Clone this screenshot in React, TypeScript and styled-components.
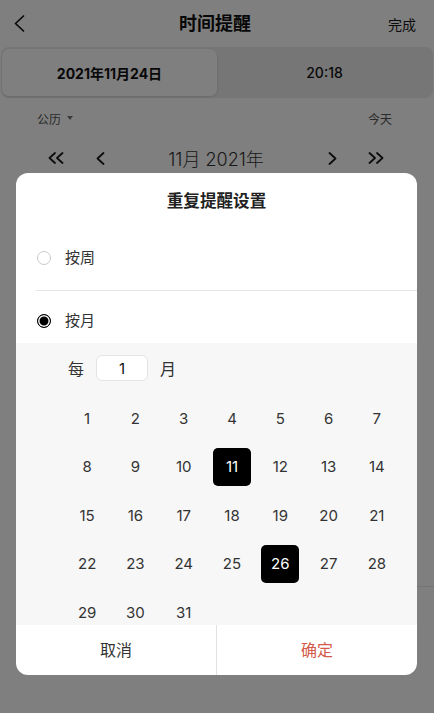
import React from "react";
import styled, { createGlobalStyle } from "styled-components";

const GlobalStyle = createGlobalStyle`
  html, body { margin: 0; padding: 0; background: #fff; }
  body { font-family: "Inter", "Noto Sans CJK SC", sans-serif; -webkit-font-smoothing: antialiased; }
  * { box-sizing: border-box; }
`;

const Screen = styled.div`
  position: relative;
  width: 434px;
  height: 713px;
  overflow: hidden;
  background: #ffffff;
`;

const Page = styled.div`
  display: flex;
  flex-direction: column;
  height: 100%;
`;

const NavBar = styled.div`
  height: 47px;
  display: grid;
  grid-template-columns: 1fr auto 1fr;
  align-items: center;
  padding: 0 18px 0 14px;
`;

const BackBtn = styled.div`
  display: flex;
  align-items: center;
  color: #111;
`;

const NavTitle = styled.div`
  font-size: 18px;
  font-weight: 700;
  color: #111;
  line-height: 1;
`;

const NavAction = styled.div`
  justify-self: end;
  font-size: 14px;
  color: #1a1a1a;
`;

const Segmented = styled.div`
  margin: 0 1px;
  height: 51px;
  padding: 2px 1px;
  display: flex;
  background: #ececec;
  border-radius: 8px;
`;

const SegTab = styled.div<{ $active?: boolean }>`
  flex: 1;
  display: flex;
  align-items: center;
  justify-content: center;
  font-size: ${(p) => (p.$active ? 14 : 14)}px;
  font-weight: ${(p) => (p.$active ? 700 : 500)};
  color: #111;
  border-radius: 7px;
  background: ${(p) => (p.$active ? "#ffffff" : "transparent")};
  box-shadow: ${(p) => (p.$active ? "0 1px 3px rgba(0,0,0,0.12)" : "none")};
`;

const SubBar = styled.div`
  height: 40px;
  display: flex;
  align-items: center;
  justify-content: space-between;
  padding: 0 42px 0 37px;
  font-size: 12px;
  color: #555;
`;

const CalType = styled.div`
  display: flex;
  align-items: center;
  gap: 6px;
`;

const Caret = styled.span`
  width: 0;
  height: 0;
  border-left: 3.5px solid transparent;
  border-right: 3.5px solid transparent;
  border-top: 4px solid #777;
`;

const MonthNav = styled.div`
  height: 40px;
  display: flex;
  align-items: center;
  padding: 0 42px 0 40px;
`;

const NavGroup = styled.div`
  display: flex;
  align-items: center;
  gap: 12px;
`;

const IconBtn = styled.div`
  width: 32px;
  display: flex;
  justify-content: center;
  color: #1a1a1a;
`;

const MonthTitle = styled.div`
  flex: 1;
  text-align: center;
  font-size: 18px;
  font-weight: 300;
  color: #333;
`;

const CalendarBody = styled.div`
  height: 408px;
`;

const PageDivider = styled.div`
  height: 1px;
  margin-left: 20px;
  background: #e8e8e8;
`;

const Overlay = styled.div`
  position: absolute;
  inset: 0;
  background: rgba(0, 0, 0, 0.5);
  padding: 173px 17px 0 16px;
`;

const Modal = styled.div`
  width: 401px;
  height: 502px;
  background: #fff;
  border-radius: 12px;
  overflow: hidden;
  display: flex;
  flex-direction: column;
`;

const ModalTitle = styled.div`
  padding: 17px 0 17px;
  line-height: 22px;
  text-align: center;
  font-size: 16.6px;
  font-weight: 700;
  color: #222;
`;

const OptionRow = styled.div<{ $bottom: number }>`
  display: flex;
  align-items: center;
  gap: 14px;
  padding: ${(p) => (p.$bottom === 20 ? 18 : 19)}px 0 ${(p) => p.$bottom + 1}px 21px;
  line-height: 22px;
  font-size: 15px;
  color: #333;
`;

const Radio = styled.span<{ $checked?: boolean }>`
  width: 14px;
  height: 14px;
  border-radius: 50%;
  border: ${(p) => (p.$checked ? "1.5px solid #000" : "1px solid #c9c9c9")};
  background: ${(p) => (p.$checked ? "#000" : "#fff")};
  box-shadow: ${(p) => (p.$checked ? "inset 0 0 0 1.5px #fff" : "none")};
`;

const RowDivider = styled.div`
  height: 1px;
  margin-left: 20px;
  background: #e6e6e6;
`;

const MonthPanel = styled.div`
  height: 282px;
  overflow: hidden;
  background: #f7f7f7;
`;

const EveryRow = styled.div`
  display: flex;
  align-items: center;
  gap: 12px;
  padding: 12px 0 0 52px;
  margin-bottom: 13px;
  font-size: 16px;
  color: #333;
`;

const NumInput = styled.div`
  width: 52px;
  height: 26px;
  border: 1px solid #e3e3e3;
  border-radius: 6px;
  background: #fff;
  display: flex;
  align-items: center;
  justify-content: center;
  font-size: 15px;
  color: #111;
`;

const DayGrid = styled.div`
  display: grid;
  grid-template-columns: repeat(7, 1fr);
  grid-auto-rows: 48.5px;
  padding: 0 16px 0 47px;
`;

const DayCell = styled.div`
  display: flex;
  align-items: center;
  justify-content: center;
`;

const DayNum = styled.div<{ $selected?: boolean }>`
  width: 38px;
  height: 38px;
  border-radius: 5px;
  display: flex;
  align-items: center;
  justify-content: center;
  font-size: 15px;
  background: ${(p) => (p.$selected ? "#000" : "transparent")};
  color: ${(p) => (p.$selected ? "#fff" : "#333")};
`;

const Footer = styled.div`
  flex: 1;
  display: flex;
`;

const FooterBtn = styled.div<{ $primary?: boolean }>`
  flex: 1;
  display: flex;
  align-items: center;
  justify-content: center;
  padding-bottom: 2px;
  font-size: 16px;
  color: ${(p) => (p.$primary ? "#d45a4b" : "#333")};
  border-left: ${(p) => (p.$primary ? "1px solid #e2e2e2" : "none")};
`;

const Chevron = ({ dir, w = 9, h = 14, sw = 1.8 }: { dir: "l" | "r"; w?: number; h?: number; sw?: number }) => (
  <svg width={w} height={h} viewBox={`0 0 ${w} ${h}`} fill="none">
    <path
      d={dir === "l" ? `M${w - 1.5} 1 L1.5 ${h / 2} L${w - 1.5} ${h - 1}` : `M1.5 1 L${w - 1.5} ${h / 2} L1.5 ${h - 1}`}
      stroke="currentColor"
      strokeWidth={sw}
      strokeLinecap="round"
      strokeLinejoin="round"
    />
  </svg>
);

const DoubleChevron = ({ dir }: { dir: "l" | "r" }) => (
  <svg width="16" height="12" viewBox="0 0 16 12" fill="none">
    <path
      d={dir === "l" ? "M7 1 L1.5 6 L7 11 M14.5 1 L9 6 L14.5 11" : "M1.5 1 L7 6 L1.5 11 M9 1 L14.5 6 L9 11"}
      stroke="currentColor"
      strokeWidth="1.8"
      strokeLinecap="round"
      strokeLinejoin="round"
    />
  </svg>
);

const days = Array.from({ length: 31 }, (_, i) => i + 1);
const selectedDays = [11, 26];

export default function App() {
  return (
    <>
      <GlobalStyle />
      <Screen>
        <Page>
          <NavBar>
            <BackBtn>
              <Chevron dir="l" w={11} h={17} sw={1.7} />
            </BackBtn>
            <NavTitle>时间提醒</NavTitle>
            <NavAction>完成</NavAction>
          </NavBar>
          <Segmented>
            <SegTab $active>2021年11月24日</SegTab>
            <SegTab>20:18</SegTab>
          </Segmented>
          <SubBar>
            <CalType>
              公历 <Caret />
            </CalType>
            <span>今天</span>
          </SubBar>
          <MonthNav>
            <NavGroup>
              <IconBtn>
                <DoubleChevron dir="l" />
              </IconBtn>
              <IconBtn>
                <Chevron dir="l" w={9} h={13} />
              </IconBtn>
            </NavGroup>
            <MonthTitle>11月 2021年</MonthTitle>
            <NavGroup>
              <IconBtn>
                <Chevron dir="r" w={9} h={13} />
              </IconBtn>
              <IconBtn>
                <DoubleChevron dir="r" />
              </IconBtn>
            </NavGroup>
          </MonthNav>
          <CalendarBody />
          <PageDivider />
        </Page>
        <Overlay>
          <Modal>
            <ModalTitle>重复提醒设置</ModalTitle>
            <OptionRow $bottom={20}>
              <Radio />
              按周
            </OptionRow>
            <RowDivider />
            <OptionRow $bottom={10}>
              <Radio $checked />
              按月
            </OptionRow>
            <MonthPanel>
              <EveryRow>
                每<NumInput>1</NumInput>月
              </EveryRow>
              <DayGrid>
                {days.map((d) => (
                  <DayCell key={d}>
                    <DayNum $selected={selectedDays.includes(d)}>{d}</DayNum>
                  </DayCell>
                ))}
              </DayGrid>
            </MonthPanel>
            <Footer>
              <FooterBtn>取消</FooterBtn>
              <FooterBtn $primary>确定</FooterBtn>
            </Footer>
          </Modal>
        </Overlay>
      </Screen>
    </>
  );
}
